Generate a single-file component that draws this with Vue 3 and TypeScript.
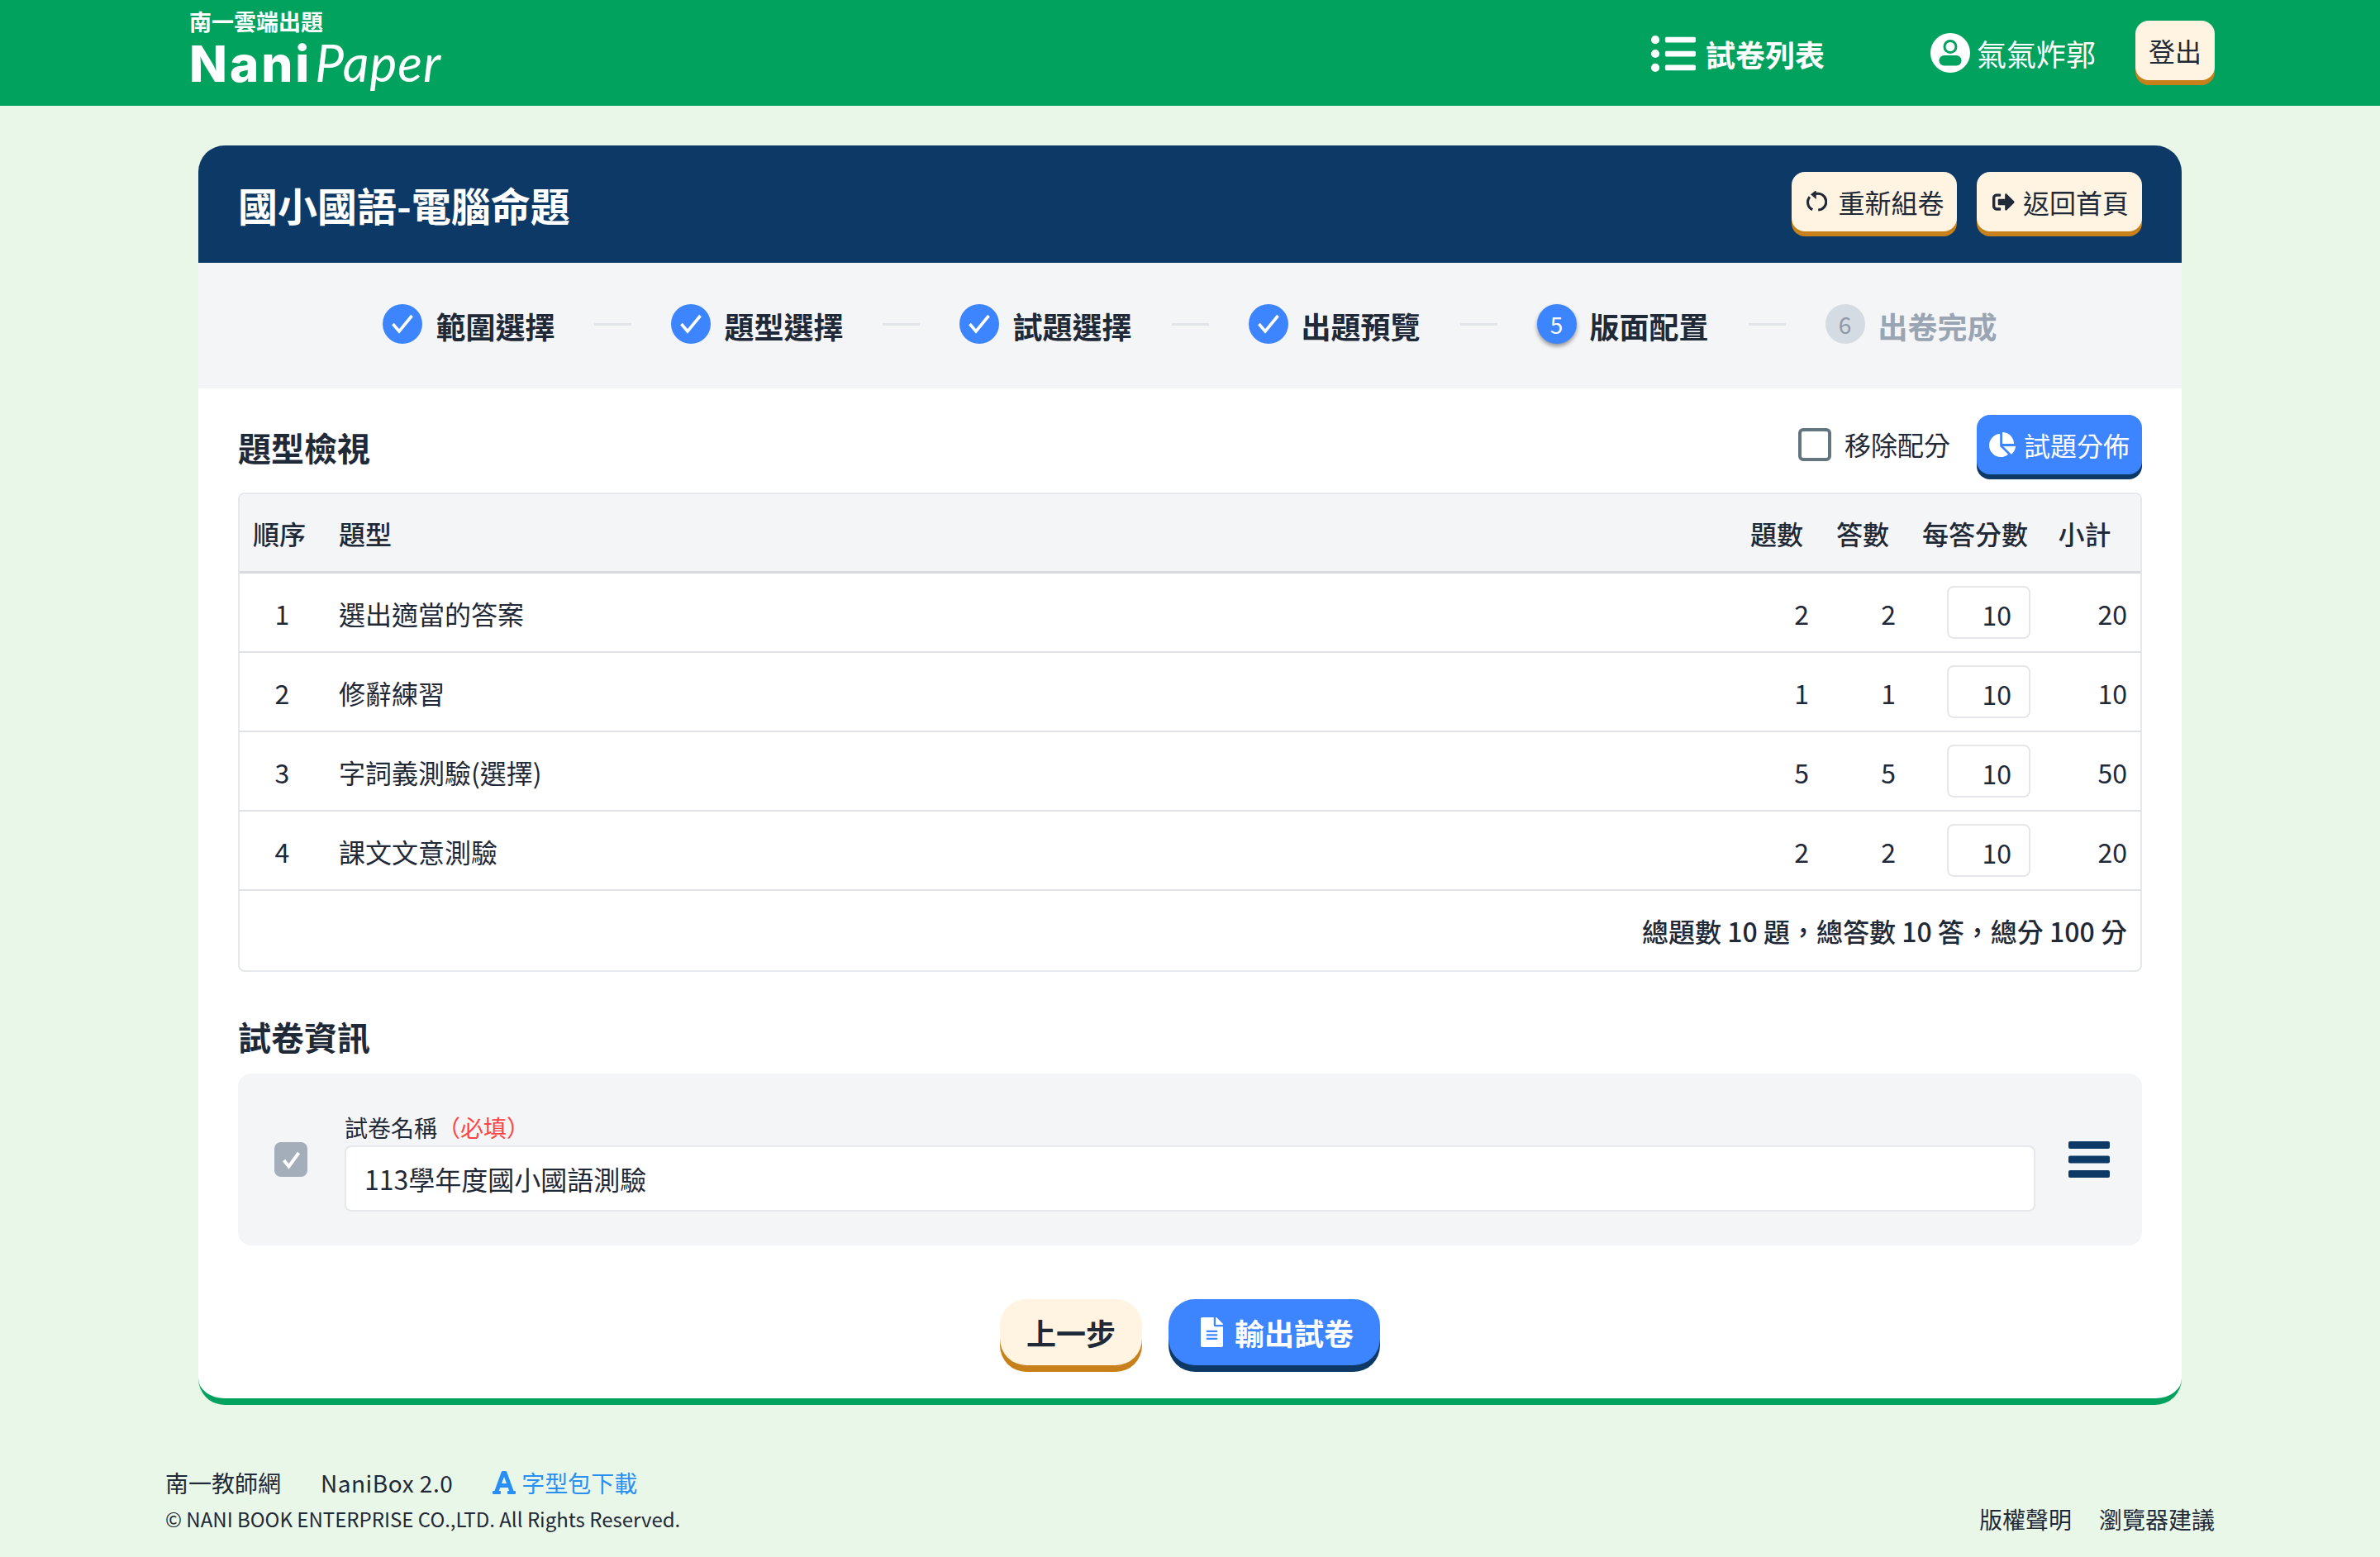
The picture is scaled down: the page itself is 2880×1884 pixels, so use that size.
<template>
  <div class="page">
    <header class="topbar">
      <div class="logo">
        <div class="logo-sub">南一雲端出題</div>
        <div class="logo-main"><span class="logo-nani">Nani</span><span class="logo-paper">Paper</span></div>
      </div>
      <nav class="topnav">
        <a class="nav-list">
          <svg class="icon-list" viewBox="0 0 512 512"><path fill="currentColor" d="M48 48a48 48 0 1 0 48 48 48 48 0 0 0-48-48zm0 160a48 48 0 1 0 48 48 48 48 0 0 0-48-48zm0 160a48 48 0 1 0 48 48 48 48 0 0 0-48-48zm448 16H176a16 16 0 0 0-16 16v32a16 16 0 0 0 16 16h320a16 16 0 0 0 16-16v-32a16 16 0 0 0-16-16zm0-320H176a16 16 0 0 0-16 16v32a16 16 0 0 0 16 16h320a16 16 0 0 0 16-16V80a16 16 0 0 0-16-16zm0 160H176a16 16 0 0 0-16 16v32a16 16 0 0 0 16 16h320a16 16 0 0 0 16-16v-32a16 16 0 0 0-16-16z" /></svg>
          試卷列表
        </a>
        <span class="nav-user">
          <svg class="icon-user" viewBox="0 0 48 48">
            <circle cx="24" cy="24" r="24" fill="#fff" />
            <circle cx="24" cy="16.5" r="7" fill="none" stroke="#00a25e" stroke-width="3" />
            <rect x="10.5" y="27" width="27" height="12.5" rx="6.2" fill="#00a25e" />
          </svg>
          氣氣炸郭
        </span>
        <button class="btn btn-cream btn-logout">登出</button>
      </nav>
    </header>

    <main class="card">
      <div class="card-title">
        <h1>國小國語-電腦命題</h1>
        <div class="title-actions">
          <button class="btn btn-cream btn-small btn-reset">
            <svg class="icon-reset" viewBox="11 11 30 30" fill="none" stroke="currentColor" stroke-width="3.400">
              <path d="M29 36.6A11 11 0 1 0 25.700 15" />
              <path d="M21.400 36.200A11 11 0 0 1 17.600 19" />
              <path d="M25.500 11.500 20 15.800l5.500 4.700z" fill="currentColor" stroke-width="1.500" />
            </svg>
            重新組卷
          </button>
          <button class="btn btn-cream btn-small btn-return">
            <svg class="icon-out" viewBox="0 0 512 512"><path fill="currentColor" d="M497 273L329 441c-15 15-41 4.500-41-17v-96H152c-13.300 0-24-10.700-24-24v-96c0-13.300 10.700-24 24-24h136V88c0-21.400 25.900-32 41-17l168 168c9.300 9.400 9.300 24.600 0 34zM192 436v-40c0-6.600-5.400-12-12-12H96c-17.700 0-32-14.300-32-32V160c0-17.700 14.300-32 32-32h84c6.600 0 12-5.400 12-12V76c0-6.600-5.400-12-12-12H96c-53 0-96 43-96 96v192c0 53 43 96 96 96h84c6.600 0 12-5.400 12-12z" /></svg>
            返回首頁
          </button>
        </div>
      </div>

      <ol class="steps">
        <template v-for="(step, i) in steps" :key="step.label">
          <li v-if="i > 0" class="step-line"></li>
          <li class="step" :class="step.state">
            <span class="step-dot">
              <svg v-if="step.state === 'done'" viewBox="0 0 48 48" class="step-check"><path d="M12.500 24l7.500 9 15.500-19" fill="none" stroke="#fff" stroke-width="3.600" /></svg>
              <template v-else>{{ i + 1 }}</template>
            </span>
            <span class="step-label">{{ step.label }}</span>
          </li>
        </template>
      </ol>

      <section class="body">
        <div class="section-head">
          <h2>題型檢視</h2>
          <div class="section-tools">
            <label class="check-row"><span class="check-box"></span><span class="check-text">移除配分</span></label>
            <button class="btn btn-blue btn-small">
              <svg class="icon-pie" viewBox="0 0 544 512"><path fill="currentColor" d="M527.790 288H290.500l158.030 158.030c6.040 6.040 15.980 6.530 22.190.680 38.700-36.460 65.320-85.610 73.130-140.860 1.340-9.460-6.510-17.850-16.060-17.850zm-15.830-64.800C503.720 103.740 408.260 8.280 288.800.040 279.680-.590 272 7.100 272 16.240V240h223.770c9.140 0 16.820-7.680 16.190-16.800zM224 288V50.710c0-9.550-8.390-17.400-17.840-16.060C86.990 51.490-4.100 155.600.140 280.370 4.500 408.510 114.830 513.590 243.030 511.980c50.400-.630 96.970-16.870 135.260-44.030 7.900-5.600 8.420-17.230 1.570-24.080L224 288z" /></svg>
              試題分佈
            </button>
          </div>
        </div>

        <div class="table">
          <div class="row row-head">
            <span class="c-order c-order-head">順序</span>
            <span class="c-name">題型</span>
            <span class="c-head c-head-q">題數</span>
            <span class="c-head c-head-a">答數</span>
            <span class="c-head c-head-s">每答分數</span>
            <span class="c-head c-head-last">小計</span>
          </div>
          <div v-for="(row, i) in rows" :key="row.name" class="row">
            <span class="c-order c-order-num">{{ i + 1 }}</span>
            <span class="c-name">{{ row.name }}</span>
            <span class="c-num">{{ row.count }}</span>
            <span class="c-num">{{ row.answers }}</span>
            <span class="c-score"><input class="score-input" type="text" :value="row.score" readonly /></span>
            <span class="c-sub">{{ row.count * row.score }}</span>
          </div>
          <div class="row-total">總題數 10 題，總答數 10 答，總分 100 分</div>
        </div>

        <h2 class="info-title">試卷資訊</h2>
        <div class="info-panel">
          <span class="info-check">
            <svg viewBox="0 0 40 42"><path d="M11.500 22l6 7.500L29.500 13" fill="none" stroke="#fff" stroke-width="4" /></svg>
          </span>
          <div class="info-field">
            <label class="info-label">試卷名稱<span class="required">（必填）</span></label>
            <input class="info-input" type="text" value="113學年度國小國語測驗" readonly />
          </div>
          <svg class="icon-bars" viewBox="0 0 50 44">
            <rect x="0" y="0" width="50" height="9" rx="2" />
            <rect x="0" y="17.500" width="50" height="9" rx="2" />
            <rect x="0" y="35" width="50" height="9" rx="2" />
          </svg>
        </div>

        <div class="actions">
          <button class="btn btn-cream btn-big">上一步</button>
          <button class="btn btn-blue btn-big">
            <svg class="icon-doc" viewBox="0 0 384 512"><path fill="currentColor" d="M224 136V0H24C10.700 0 0 10.700 0 24v464c0 13.300 10.700 24 24 24h336c13.300 0 24-10.700 24-24V160H248c-13.200 0-24-10.800-24-24zm64 236c0 6.600-5.400 12-12 12H108c-6.600 0-12-5.400-12-12v-8c0-6.600 5.400-12 12-12h168c6.600 0 12 5.400 12 12v8zm0-64c0 6.600-5.400 12-12 12H108c-6.600 0-12-5.400-12-12v-8c0-6.600 5.400-12 12-12h168c6.600 0 12 5.400 12 12v8zm0-72v8c0 6.600-5.400 12-12 12H108c-6.600 0-12-5.400-12-12v-8c0-6.600 5.400-12 12-12h168c6.600 0 12 5.400 12 12zm96-114.100v6.100H256V0h6.100c6.400 0 12.500 2.500 17 7l97.900 98c4.500 4.500 7 10.600 7 16.900z" /></svg>
            輸出試卷
          </button>
        </div>
      </section>
    </main>

    <footer class="footer">
      <div class="footer-left">
        <div class="footer-links">
          <a>南一教師網</a>
          <a class="box-link">NaniBox 2.0</a>
          <a class="font-link">
            <svg class="icon-font" viewBox="0 0 448 512"><path fill="currentColor" d="M432 416h-23.410L277.880 53.690A32 32 0 0 0 247.580 32h-47.160a32 32 0 0 0-30.300 21.690L39.410 416H16a16 16 0 0 0-16 16v32a16 16 0 0 0 16 16h128a16 16 0 0 0 16-16v-32a16 16 0 0 0-16-16h-19.580l23.300-64h152.560l23.300 64H304a16 16 0 0 0-16 16v32a16 16 0 0 0 16 16h128a16 16 0 0 0 16-16v-32a16 16 0 0 0-16-16zM176.850 272L224 142.510 271.150 272z" /></svg>
            字型包下載
          </a>
        </div>
        <div class="copyright">© NANI BOOK ENTERPRISE CO.,LTD. All Rights Reserved.</div>
      </div>
      <div class="footer-right">
        <a>版權聲明</a>
        <a>瀏覽器建議</a>
      </div>
    </footer>
  </div>
</template>

<script setup lang="ts">
interface Step {
  label: string;
  state: 'done' | 'current' | 'todo';
}

interface QuestionRow {
  name: string;
  count: number;
  answers: number;
  score: number;
}

const steps: Step[] = [
  { label: '範圍選擇', state: 'done' },
  { label: '題型選擇', state: 'done' },
  { label: '試題選擇', state: 'done' },
  { label: '出題預覽', state: 'done' },
  { label: '版面配置', state: 'current' },
  { label: '出卷完成', state: 'todo' },
];

const rows: QuestionRow[] = [
  { name: '選出適當的答案', count: 2, answers: 2, score: 10 },
  { name: '修辭練習', count: 1, answers: 1, score: 10 },
  { name: '字詞義測驗(選擇)', count: 5, answers: 5, score: 10 },
  { name: '課文文意測驗', count: 2, answers: 2, score: 10 },
];
</script>

<style scoped>
.page {
  min-height: 1884px;
  background: #e9f7e8;
  color: #1f2937;
  font-family: "Noto Sans CJK TC", "Noto Sans", sans-serif;
  font-size: 32px;
  line-height: 48px;
}

.topbar {
  height: 128px;
  background: #00a25e;
  color: #fff;
  display: flex;
  justify-content: space-between;
  align-items: flex-start;
  padding: 0 200px 0 229px;
  box-sizing: border-box;
}
.logo-sub {
  margin-top: 10px;
  font-size: 27px;
  line-height: 32px;
  font-weight: 700;
}
.logo-main {
  display: flex;
  align-items: baseline;
  font-size: 60px;
  line-height: 66px;
}
.logo-nani {
  font-family: Inter, sans-serif;
  font-weight: 800;
  letter-spacing: 3px;
}
.logo-paper {
  margin-left: 4px;
  font-family: Lato, sans-serif;
  font-size: 62px;
  font-weight: 400;
  font-style: italic;
  letter-spacing: 1px;
}
.topnav {
  display: flex;
  align-items: flex-start;
}
.nav-list {
  display: flex;
  align-items: center;
  gap: 12px;
  margin-top: 38px;
  font-size: 36px;
  font-weight: 700;
}
.icon-list {
  width: 54px;
  height: 54px;
}
.nav-user {
  display: flex;
  align-items: center;
  gap: 8px;
  margin: 40px 48px 0 128px;
  font-size: 36px;
}
.icon-user {
  width: 48px;
  height: 48px;
}

.btn {
  display: inline-flex;
  align-items: center;
  justify-content: center;
  border: none;
  padding: 0;
  font-family: inherit;
  font-size: 32px;
  line-height: 48px;
  border-radius: 16px;
  cursor: pointer;
}
.btn-cream {
  background: #fff3e1;
  color: #1f2937;
  box-shadow: 0 6px 0 #c8811a;
}
.btn-blue {
  background: #3d84ff;
  color: #fff;
  box-shadow: 0 6px 0 #0d3966;
}
.btn-logout {
  width: 96px;
  height: 72px;
  margin-top: 25px;
}
.btn-small {
  width: 200px;
  height: 72px;
  gap: 10px;
}
.btn-reset {
  gap: 13px;
  padding-left: 1px;
}
.btn-return {
  padding-left: 3px;
}
.btn-big {
  height: 80px;
  padding: 0 32px;
  border-radius: 32px;
  font-size: 36px;
  font-weight: 700;
  gap: 14px;
  box-shadow: 0 8px 0 #c8811a;
}
.btn-blue.btn-big {
  padding: 0 32px 0 39px;
  box-shadow: 0 8px 0 #0d3966;
}
.icon-reset {
  width: 27px;
  height: 27px;
}
.icon-out {
  width: 27px;
  height: 27px;
}
.icon-pie {
  width: 32px;
  height: 30px;
}
.icon-doc {
  width: 27px;
  height: 36px;
}

.card {
  width: 2400px;
  margin: 48px auto 0;
  background: #fff;
  border-radius: 32px;
  border-bottom: 8px solid #00a25e;
  overflow: hidden;
}
.card-title {
  height: 142px;
  background: #0d3966;
  color: #fff;
  display: flex;
  justify-content: space-between;
  padding: 32px 48px 0;
  box-sizing: border-box;
}
.card-title h1 {
  margin: 7px 0 0;
  font-size: 48px;
  line-height: 64px;
  font-weight: 700;
}
.title-actions {
  display: flex;
  gap: 24px;
  align-items: flex-start;
}

.steps {
  height: 152px;
  margin: 0;
  padding: 0;
  list-style: none;
  background: #f4f5f7;
  display: flex;
  align-items: center;
  justify-content: center;
  gap: 48px;
}
.step {
  display: flex;
  align-items: center;
  gap: 16px;
  font-size: 36px;
  font-weight: 700;
}
.step-line {
  width: 45px;
  height: 3px;
  margin-top: -4px;
  background: #e1e4e9;
}
.step-dot {
  width: 48px;
  height: 48px;
  border-radius: 50%;
  background: #3d84ff;
  color: #fff;
  display: flex;
  align-items: center;
  justify-content: center;
  font-size: 28px;
  font-weight: 400;
  margin-top: -4px;
}
.step-check {
  width: 48px;
  height: 48px;
}
.step.current .step-dot {
  box-shadow: 0 3px 5px rgba(0, 0, 0, 0.4);
}
.step.todo .step-dot {
  background: #d5dbe3;
  color: #8d99a8;
}
.step.todo .step-label {
  color: #9aa5b4;
}

.body {
  padding: 32px 48px;
}
.section-head {
  height: 78px;
  margin-bottom: 16px;
  display: flex;
  justify-content: space-between;
}
h2 {
  margin: 0;
  font-size: 40px;
  line-height: 60px;
  font-weight: 700;
}
.section-head h2 {
  margin-top: 9px;
}
.section-tools {
  display: flex;
  align-items: flex-start;
}
.check-row {
  display: flex;
  align-items: center;
  gap: 16px;
  margin: 13px 32px 0 0;
}
.check-text {
  margin-top: -2px;
}
.check-box {
  width: 40px;
  height: 40px;
  box-sizing: border-box;
  border: 4px solid #64757f;
  border-radius: 6px;
  background: #fff;
}

.table {
  border: 2px solid #e5e7eb;
  border-radius: 8px;
  overflow: hidden;
}
.row {
  display: grid;
  grid-template-columns: 100px 1fr 102px 105px 164px 117px;
  align-items: center;
  height: 96px;
  box-sizing: border-box;
  border-bottom: 2px solid #e0e2e6;
}
.row-head {
  background: #f4f5f7;
  border-bottom: 3px solid #d8dade;
  font-weight: 500;
}
.c-order {
  text-align: center;
}
.c-order-head {
  padding-right: 4px;
}
.c-order-num {
  padding: 2px 0 0 3px;
}
.c-name {
  padding-left: 20px;
}
.row:not(.row-head) .c-name,
.c-num,
.c-sub {
  padding-top: 2px;
}
.c-head {
  text-align: center;
}
.c-head-q {
  padding-right: 6px;
}
.c-head-a {
  padding-right: 5px;
}
.c-head-s {
  padding-right: 2px;
}
.c-head-last {
  padding-right: 18px;
}
.c-num {
  text-align: right;
  padding-right: 15px;
}
.c-sub {
  text-align: right;
  padding-right: 16px;
}
.c-score {
  display: flex;
  justify-content: flex-end;
  padding-right: 16px;
}
.score-input {
  width: 101px;
  height: 64px;
  box-sizing: border-box;
  border: 2px solid #e5e7eb;
  border-radius: 8px;
  padding: 3px 21px 0 0;
  text-align: right;
  font-family: inherit;
  font-size: 32px;
  color: #1f2937;
  outline: none;
}
.row-total {
  height: 96px;
  display: flex;
  align-items: center;
  justify-content: flex-end;
  padding-right: 16px;
  font-weight: 500;
}

.info-title {
  margin: 48px 0 15px;
}
.info-panel {
  display: flex;
  align-items: center;
  height: 208px;
  box-sizing: border-box;
  padding: 0 39px 0 44px;
  background: #f4f5f7;
  border-radius: 16px;
}
.info-check {
  width: 40px;
  height: 42px;
  border-radius: 8px;
  background: #a4aebb;
  flex: none;
}
.info-check svg {
  display: block;
  width: 40px;
  height: 42px;
}
.info-field {
  flex: 1;
  margin: 4px 40px 0 45px;
}
.info-label {
  display: block;
  font-size: 28px;
  line-height: 40px;
  margin-bottom: 2px;
}
.required {
  color: #ff4444;
}
.info-input {
  display: block;
  width: 100%;
  height: 80px;
  box-sizing: border-box;
  border: 2px solid #e5e7eb;
  border-radius: 8px;
  padding: 0 22px;
  font-family: inherit;
  font-size: 32px;
  color: #1f2937;
  background: #fff;
  outline: none;
}
.icon-bars {
  width: 50px;
  height: 44px;
  fill: #0d3966;
  flex: none;
}

.actions {
  display: flex;
  justify-content: center;
  gap: 32px;
  margin-top: 65px;
  padding-bottom: 8px;
}

.footer {
  display: flex;
  justify-content: space-between;
  align-items: flex-end;
  width: 2480px;
  margin: 0 auto;
  padding-top: 75px;
  font-size: 28px;
  line-height: 38px;
}
.footer-links {
  display: flex;
  gap: 48px;
  margin-bottom: 6px;
}
.box-link {
  letter-spacing: 0.5px;
}
.font-link {
  display: flex;
  align-items: center;
  gap: 7px;
  color: #2a8ff5;
}
.icon-font {
  width: 28px;
  height: 32px;
}
.copyright {
  font-size: 24px;
}
.footer-right {
  display: flex;
  gap: 33px;
}
</style>

<style>
html,
body {
  margin: 0;
  background: #e9f7e8;
}
</style>
